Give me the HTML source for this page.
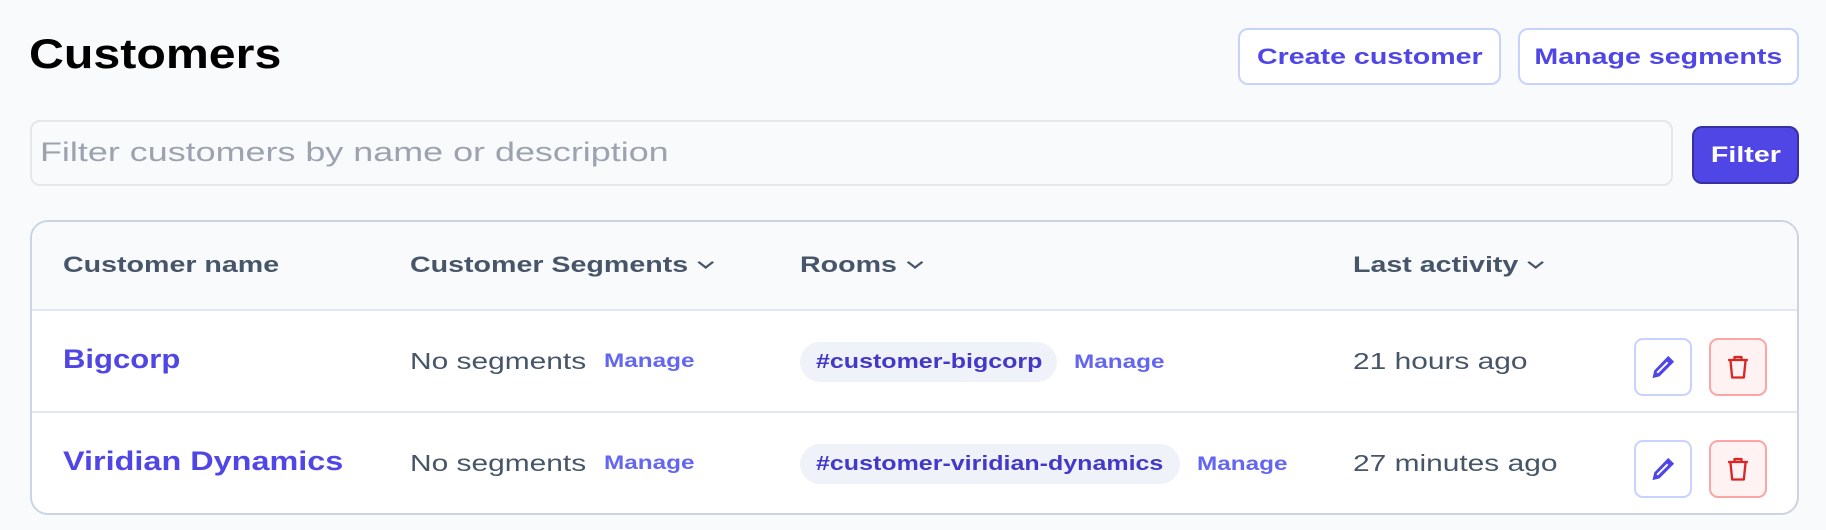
<!DOCTYPE html>
<html><head><style>
*{box-sizing:border-box;margin:0;padding:0}
body{width:1826px;height:530px;background:#f8fafc;font-family:"Liberation Sans",sans-serif;position:relative;overflow:hidden;color:#334155}
.a{position:absolute;white-space:nowrap;transform-origin:left center}
.btn{position:absolute;border:2px solid #c7d2fe;border-radius:10px;background:#fff;color:#4f46e5;font-weight:bold;font-size:22px;display:flex;align-items:center;justify-content:center}
.btn span{display:inline-block;transform:scaleX(1.3)}
.hd{font-size:22px;color:#475569;font-weight:bold;top:252px;transform:scaleX(1.3)}
.chev{display:inline-block;width:9px;height:9px;border-right:2.5px solid #475569;border-bottom:2.5px solid #475569;transform:rotate(45deg);margin-left:9px;position:relative;top:-5px}
.name{font-size:27px;font-weight:bold;color:#4f46e5}
.txt{font-size:23px;color:#475569;transform:scaleX(1.3)}
.man{font-size:19px;font-weight:bold;color:#6366f1;transform:scaleX(1.28)}
.pill{position:absolute;height:40px;border-radius:20px;background:#eff3f9;color:#4338ca;font-weight:bold;font-size:20px;padding:0 16px;display:flex;align-items:center;white-space:nowrap}
.pill span{display:inline-block;transform:scaleX(1.25);transform-origin:left center}
.ib{position:absolute;width:58px;height:58px;border-radius:9px;display:flex;align-items:center;justify-content:center}
.ed{border:2px solid #c7d2fe;background:#fff}
.dl{border:2px solid #fca5a5;background:#fef2f2}
</style></head><body>
<div class="a" style="left:29px;top:30px;font-size:42px;font-weight:bold;color:#000;transform:scaleX(1.15)">Customers</div>
<div class="btn" style="left:1238px;top:28px;width:263px;height:57px"><span>Create customer</span></div>
<div class="btn" style="left:1518px;top:28px;width:281px;height:57px"><span>Manage segments</span></div>
<div class="a" style="left:30px;top:120px;width:1643px;height:66px;border:2px solid #e5e7eb;border-radius:10px;background:#f8fafc"></div>
<div class="a" style="left:40px;top:137px;font-size:27px;color:#9ca3af;transform:scaleX(1.33)">Filter customers by name or description</div>
<div class="btn" style="left:1692px;top:126px;width:107px;height:58px;background:#4f46e5;border-color:#3730a3;color:#fff"><span>Filter</span></div>
<div class="a" style="left:30px;top:220px;width:1769px;height:295px;border:2px solid #cbd5e1;border-radius:18px;background:#fff;overflow:hidden">
<div style="height:89px;background:#f8fafc;border-bottom:2px solid #e2e8f0"></div>
<div style="height:102px;border-bottom:2px solid #e2e8f0"></div>
</div>
<div class="a hd" style="left:63px">Customer name</div>
<div class="a hd" style="left:410px">Customer Segments<span class="chev"></span></div>
<div class="a hd" style="left:800px">Rooms<span class="chev"></span></div>
<div class="a hd" style="left:1353px">Last activity<span class="chev"></span></div>

<div class="a name" style="left:63px;top:344px;transform:scaleX(1.15)">Bigcorp</div>
<div class="a txt" style="left:410px;top:348px">No segments</div>
<div class="a man" style="left:604px;top:351px">Manage</div>
<div class="pill" style="left:800px;top:342px;width:257px"><span>#customer-bigcorp</span></div>
<div class="a man" style="left:1074px;top:352px">Manage</div>
<div class="a txt" style="left:1353px;top:348px">21 hours ago</div>

<div class="a name" style="left:63px;top:446px;transform:scaleX(1.2)">Viridian Dynamics</div>
<div class="a txt" style="left:410px;top:450px">No segments</div>
<div class="a man" style="left:604px;top:453px">Manage</div>
<div class="pill" style="left:800px;top:444px;width:380px"><span>#customer-viridian-dynamics</span></div>
<div class="a man" style="left:1197px;top:454px">Manage</div>
<div class="a txt" style="left:1353px;top:450px">27 minutes ago</div>

<div class="ib ed" style="left:1634px;top:338px"><svg width="28" height="28" viewBox="0 0 24 24"><path d="M16.5 2.5l5 5L9 20l-6 1.5L4.5 15z" fill="#4f46e5"/><path d="M7 17l9-9" stroke="#fff" stroke-width="1.6"/></svg></div>
<div class="ib dl" style="left:1709px;top:338px"><svg width="28" height="28" viewBox="0 0 24 24" fill="none" stroke="#dc2626" stroke-width="2" stroke-linejoin="round"><path d="M3.5 6h17M9 6V3.5h6V6M5.5 6l1.5 15h10l1.5-15"/></svg></div>
<div class="ib ed" style="left:1634px;top:440px"><svg width="28" height="28" viewBox="0 0 24 24"><path d="M16.5 2.5l5 5L9 20l-6 1.5L4.5 15z" fill="#4f46e5"/><path d="M7 17l9-9" stroke="#fff" stroke-width="1.6"/></svg></div>
<div class="ib dl" style="left:1709px;top:440px"><svg width="28" height="28" viewBox="0 0 24 24" fill="none" stroke="#dc2626" stroke-width="2" stroke-linejoin="round"><path d="M3.5 6h17M9 6V3.5h6V6M5.5 6l1.5 15h10l1.5-15"/></svg></div>
</body></html>
